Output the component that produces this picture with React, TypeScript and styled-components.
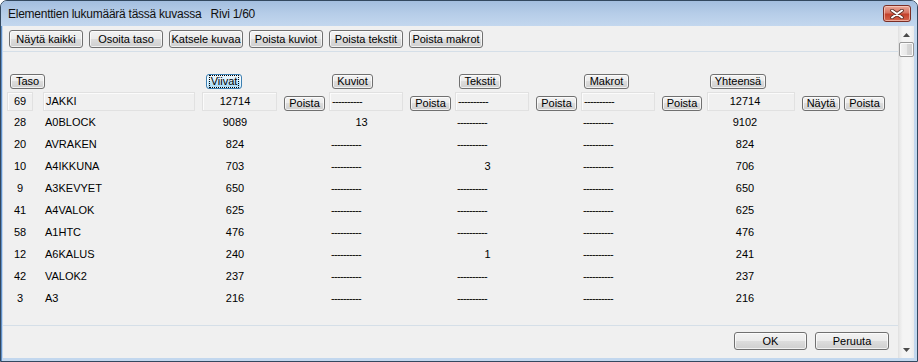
import React from "react";
import styled, { createGlobalStyle } from "styled-components";

const Global = createGlobalStyle`
  *, *::before, *::after { box-sizing: border-box; }
  html, body { margin: 0; padding: 0; background: #ffffff; }
  body { font-family: "Liberation Sans", Arial, sans-serif; font-size: 11px; color: #000; }
  #root { width: 918px; height: 362px; }
`;

const Window = styled.div`
  width: 918px;
  height: 362px;
  border: 1px solid #33485f;
  border-radius: 7px 7px 0 0;
  background: #b9d0ea;
  display: flex;
  flex-direction: column;
  overflow: hidden;
`;

const TitleBar = styled.div`
  height: 25px;
  flex: none;
  display: flex;
  align-items: center;
  padding: 0 6px 0 7px;
  background: linear-gradient(#a3bedf, #b6cde8 50%, #c3d7ee);
`;

const Title = styled.div`
  font-family: "Liberation Sans", Arial, sans-serif;
  font-size: 12px;
  letter-spacing: -0.25px;
  color: #111;
  white-space: pre;
`;

const CloseButton = styled.div`
  margin-left: auto;
  width: 28px;
  height: 17px;
  border: 1px solid #7b2e25;
  border-radius: 3px;
  background: linear-gradient(#e9a899, #d77462 45%, #c4412b 55%, #d5664e);
  box-shadow: inset 0 0 0 1px rgba(255, 220, 210, 0.6);
  display: flex;
  align-items: center;
  justify-content: center;
`;

const Frame = styled.div`
  flex: 1;
  display: flex;
  padding: 0 3px 3px 2px;
  background: linear-gradient(to right, #5f8fc8, #5f8fc8 1px, #c2d7ee 1px);
`;

const Client = styled.div`
  flex: 1;
  display: flex;
  background: #f0f0f0;
`;

const Main = styled.div`
  flex: 1;
  display: flex;
  flex-direction: column;
`;

const Toolbar = styled.div`
  height: 26px;
  flex: none;
  display: flex;
  align-items: flex-start;
  gap: 6px;
  padding: 4px 0 0 6px;
  border-bottom: 1px solid #d5dfe8;
`;

const Btn = styled.div<{ $w: number; $h: number; $focus?: boolean }>`
  width: ${(p) => p.$w}px;
  height: ${(p) => p.$h}px;
  flex: none;
  border: 1px solid ${(p) => (p.$focus ? "#3c7fb1" : "#707070")};
  border-radius: 3px;
  background: ${(p) =>
    p.$focus
      ? "linear-gradient(#eaf6fd, #d9f0fc 49%, #bee6fd 50%, #a7d9f5)"
      : "linear-gradient(#f2f2f2, #ebebeb 49%, #dddddd 50%, #cfcfcf)"};
  box-shadow: inset 0 0 0 1px rgba(255, 255, 255, 0.7);
  display: flex;
  align-items: center;
  justify-content: center;
  font-size: 11px;
  line-height: 1;
  color: #000;
  white-space: nowrap;
`;

const FocusLabel = styled.span`
  outline: 1px dotted #000;
  outline-offset: 0;
  padding: 0 1px;
  line-height: 11px;
`;

const Table = styled.div`
  flex: 1;
  padding: 22px 0 0 4px;
`;

const Row = styled.div<{ $h: number; $mt?: number }>`
  display: grid;
  grid-template-columns: 36px 159px 82px 45px 81px 45px 81px 45px 81px 45px 95px 42px 47px;
  height: ${(p) => p.$h}px;
  margin-top: ${(p) => p.$mt ?? 0}px;
  align-items: center;
`;

const HeaderSlot = styled.div<{ $col: number; $ml: number }>`
  grid-column: ${(p) => p.$col};
  margin-left: ${(p) => p.$ml}px;
  display: flex;
`;

const Cell = styled.div<{ $w: number; $pr?: number; $dash?: boolean; $left?: boolean }>`
  width: ${(p) => p.$w}px;
  height: 22px;
  line-height: 22px;
  white-space: nowrap;
  text-align: ${(p) => (p.$dash || p.$left ? "left" : "center")};
  padding: ${(p) => (p.$dash || p.$left ? "0 0 0 2px" : `0 ${p.$pr ?? 0}px 0 0`)};
`;

const Field = styled(Cell)`
  height: 19px;
  line-height: 17px;
  border: 1px solid #e1e1e1;
  box-shadow: inset 1px 1px 0 #fbfbfb;
  background: #f0f0f0;
  align-self: start;
`;

const RowBtnSlot = styled.div`
  align-self: end;
  display: flex;
`;

const Dashes = styled.span`
  letter-spacing: -0.66px;
`;

const Footer = styled.div`
  height: 33px;
  flex: none;
  border-top: 1px solid #d5dfe8;
  display: flex;
  justify-content: flex-end;
  align-items: flex-start;
  gap: 8px;
  padding: 6px 9px 0 0;
`;

const ScrollBar = styled.div`
  width: 16px;
  flex: none;
  display: flex;
  flex-direction: column;
  border-left: 1px solid #e2e2e2;
  background: linear-gradient(to right, #e6e6e6, #f4f4f4 25%, #f4f4f4 75%, #ebebeb);
`;

const ArrowBox = styled.div`
  height: 17px;
  flex: none;
  display: flex;
  align-items: center;
  justify-content: center;
`;

const Thumb = styled.div`
  height: 15px;
  margin: -1px 0 0 0;
  border: 1px solid #979797;
  border-radius: 2px;
  background: linear-gradient(to right, #f3f3f3, #e8e8e8 50%, #d8d8d8 51%, #cfcfcf);
  box-shadow: inset 0 0 0 1px #fbfbfb;
`;

const Track = styled.div`
  flex: 1;
`;

const dash = "----------";

type Val = number | null;
type DataRow = { n: number; name: string; v: Val; k: Val; t: Val; m: Val; total: number };

const rows: DataRow[] = [
  { n: 28, name: "A0BLOCK", v: 9089, k: 13, t: null, m: null, total: 9102 },
  { n: 20, name: "AVRAKEN", v: 824, k: null, t: null, m: null, total: 824 },
  { n: 10, name: "A4IKKUNA", v: 703, k: null, t: 3, m: null, total: 706 },
  { n: 9, name: "A3KEVYET", v: 650, k: null, t: null, m: null, total: 650 },
  { n: 41, name: "A4VALOK", v: 625, k: null, t: null, m: null, total: 625 },
  { n: 58, name: "A1HTC", v: 476, k: null, t: null, m: null, total: 476 },
  { n: 12, name: "A6KALUS", v: 240, k: null, t: 1, m: null, total: 241 },
  { n: 42, name: "VALOK2", v: 237, k: null, t: null, m: null, total: 237 },
  { n: 3, name: "A3", v: 216, k: null, t: null, m: null, total: 216 },
];

const toolbarButtons = ["Näytä kaikki", "Osoita taso", "Katsele kuvaa", "Poista kuviot", "Poista tekstit", "Poista makrot"];

const headers = [
  { label: "Taso", col: 1, ml: 3, w: 35 },
  { label: "Viivat", col: 3, ml: 4, w: 36, focus: true },
  { label: "Kuviot", col: 5, ml: 3, w: 41 },
  { label: "Tekstit", col: 7, ml: 4, w: 42 },
  { label: "Makrot", col: 9, ml: 3, w: 45 },
  { label: "Yhteensä", col: 11, ml: 3, w: 56 },
];

const ValueCell = ({ value, w }: { value: Val; w: number }) =>
  value === null ? (
    <Cell $w={w} $dash>
      <Dashes>{dash}</Dashes>
    </Cell>
  ) : (
    <Cell $w={w} $pr={9}>
      {value}
    </Cell>
  );

const ValueField = ({ value, w, pr = 9 }: { value: Val; w: number; pr?: number }) =>
  value === null ? (
    <Field $w={w} $dash>
      <Dashes>{dash}</Dashes>
    </Field>
  ) : (
    <Field $w={w} $pr={pr}>
      {value}
    </Field>
  );

const SmallBtn = ({ label, w }: { label: string; w: number }) => (
  <RowBtnSlot>
    <Btn $w={w} $h={15}>
      {label}
    </Btn>
  </RowBtnSlot>
);

export default function App() {
  return (
    <>
      <Global />
      <Window>
        <TitleBar>
          <Title>Elementtien lukumäärä tässä kuvassa   Rivi 1/60</Title>
          <CloseButton>
            <svg width="14" height="10" viewBox="0 0 14 10">
              <path d="M2 1.5 L12 8.5 M12 1.5 L2 8.5" stroke="#5b2b22" strokeWidth="3.6" strokeLinecap="round" />
              <path d="M2 1.5 L12 8.5 M12 1.5 L2 8.5" stroke="#ffffff" strokeWidth="2" strokeLinecap="round" />
            </svg>
          </CloseButton>
        </TitleBar>
        <Frame>
          <Client>
            <Main>
              <Toolbar>
                {toolbarButtons.map((b) => (
                  <Btn key={b} $w={74} $h={18}>
                    {b}
                  </Btn>
                ))}
              </Toolbar>
              <Table>
                <Row $h={15}>
                  {headers.map((h) => (
                    <HeaderSlot key={h.label} $col={h.col} $ml={h.ml}>
                      <Btn $w={h.w} $h={15} $focus={h.focus}>
                        {h.focus ? <FocusLabel>{h.label}</FocusLabel> : h.label}
                      </Btn>
                    </HeaderSlot>
                  ))}
                </Row>
                <Row $h={19} $mt={3}>
                  <Field $w={26}>69</Field>
                  <Field $w={152} $left>
                    JAKKI
                  </Field>
                  <ValueField value={12714} w={75} />
                  <SmallBtn label="Poista" w={41} />
                  <ValueField value={null} w={74} />
                  <SmallBtn label="Poista" w={41} />
                  <ValueField value={null} w={74} />
                  <SmallBtn label="Poista" w={41} />
                  <ValueField value={null} w={74} />
                  <SmallBtn label="Poista" w={40} />
                  <ValueField value={12714} w={88} pr={12} />
                  <SmallBtn label="Näytä" w={38} />
                  <SmallBtn label="Poista" w={41} />
                </Row>
                {rows.map((r) => (
                  <Row key={r.n} $h={22}>
                    <Cell $w={26}>{r.n}</Cell>
                    <Cell $w={152} $left>
                      {r.name}
                    </Cell>
                    <ValueCell value={r.v} w={75} />
                    <span />
                    <ValueCell value={r.k} w={74} />
                    <span />
                    <ValueCell value={r.t} w={74} />
                    <span />
                    <ValueCell value={r.m} w={74} />
                    <span />
                    <Cell $w={88} $pr={12}>
                      {r.total}
                    </Cell>
                  </Row>
                ))}
              </Table>
              <Footer>
                <Btn $w={73} $h={18}>
                  OK
                </Btn>
                <Btn $w={74} $h={18}>
                  Peruuta
                </Btn>
              </Footer>
            </Main>
            <ScrollBar>
              <ArrowBox>
                <svg width="7" height="4" viewBox="0 0 7 4">
                  <path d="M0 4 L3.5 0 L7 4 Z" fill="#4a4a4a" />
                </svg>
              </ArrowBox>
              <Thumb />
              <Track />
              <ArrowBox>
                <svg width="7" height="4" viewBox="0 0 7 4">
                  <path d="M0 0 L3.5 4 L7 0 Z" fill="#4a4a4a" />
                </svg>
              </ArrowBox>
            </ScrollBar>
          </Client>
        </Frame>
      </Window>
    </>
  );
}
